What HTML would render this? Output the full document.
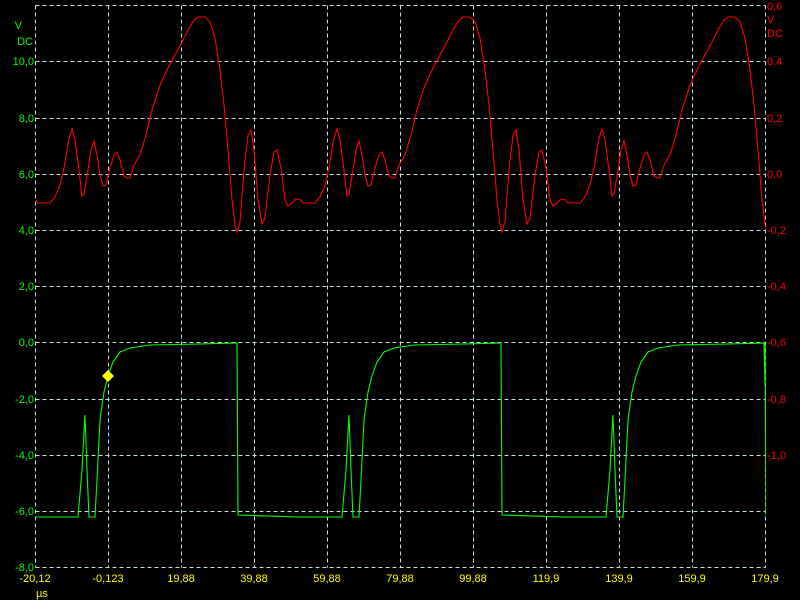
<!DOCTYPE html>
<html><head><meta charset="utf-8"><style>
html,body{margin:0;padding:0;background:#000;width:800px;height:600px;overflow:hidden}
svg{display:block}
text{font-family:"Liberation Sans",sans-serif;font-size:11px}
</style></head><body>
<svg width="800" height="600" viewBox="0 0 800 600">
<defs>
<clipPath id="c"><rect x="35" y="5" width="731" height="563"/></clipPath>
<path id="r" fill="none" stroke="#ff0000" stroke-width="1.1" d="M36,200 L38,203 L50,203 L55,197 L60,185 L64,168 L69,138 L72,129 L75,140 L79,170 L82,196 L84,194 L88,170 L91,150 L94,141 L97,155 L100,175 L103,186 L106,185 L110,168 L114,155 L117,152 L120,160 L124,176 L127,178 L130,178 L134,165 L140,155 L146,135 L152,110 L160,85 L168,68 L175,55 L182,42 L188,30 L194,20 L198,17 L205,17 L210,22 L215,38 L220,70 L224,105 L228,150 L232,200 L235,225 L237,232 L240,222 L244,170 L248,135 L251,130 L254,150 L258,200 L262,224 L265,218 L270,175 L274,152 L277,150 L281,168 L285,200 L288,206 L292,203 L296,199 L301,200"/>
<path id="g" fill="none" stroke="#00ff00" stroke-width="1.1" d="M36,517 L78,517 L82,470 L85,415 L87,470 L89,517 L95,517 L97,480 L100,420 L104,392 L108,376 L113,362 L120,352 L130,348 L150,345 L200,344 L237,343 L238,515 L300,517"/>
</defs>
<g stroke="#c8e0ec" stroke-width="1" stroke-dasharray="4,3" fill="none">
<path d="M35.5,5.5V567.5M108.5,5.5V567.5M181.5,5.5V567.5M254.5,5.5V567.5M327.5,5.5V567.5M400.5,5.5V567.5M473.5,5.5V567.5M546.5,5.5V567.5M619.5,5.5V567.5M692.5,5.5V567.5M765.5,5.5V567.5"/>
<path d="M35.5,5.5H765.5M35.5,61.5H765.5M35.5,118.5H765.5M35.5,174.5H765.5M35.5,230.5H765.5M35.5,286.5H765.5M35.5,342.5H765.5M35.5,399.5H765.5M35.5,455.5H765.5M35.5,511.5H765.5M35.5,567.5H765.5"/>
</g>
<g clip-path="url(#c)">
<use href="#r"/><use href="#r" transform="translate(265,0)"/><use href="#r" transform="translate(530,0)"/>
<use href="#g"/><use href="#g" transform="translate(264,0)"/><use href="#g" transform="translate(528,0)"/>
<path fill="none" stroke="#00ff00" stroke-width="1.1" d="M764,343 L765,385"/>
</g>
<path d="M108,370 L114,376 L108,382 L102,376Z" fill="#ffff00"/>
<g fill="#00ff00" text-anchor="end">
<text x="22" y="29">V</text><text x="33" y="45">DC</text>
<text x="34" y="65">10,0</text><text x="34" y="122">8,0</text><text x="34" y="178">6,0</text><text x="34" y="234">4,0</text><text x="34" y="290">2,0</text><text x="34" y="346">0,0</text><text x="34" y="403">-2,0</text><text x="34" y="459">-4,0</text><text x="34" y="515">-6,0</text><text x="34" y="571">-8,0</text>
</g>
<g fill="#ff0000">
<text x="767" y="10">0,6</text><text x="767" y="23">V</text><text x="767" y="37">DC</text>
<text x="767" y="65">0,4</text><text x="767" y="122">0,2</text><text x="767" y="178">0,0</text><text x="767" y="234">-0,2</text><text x="767" y="290">-0,4</text><text x="767" y="346">-0,6</text><text x="767" y="403">-0,8</text><text x="767" y="459">-1,0</text>
</g>
<g fill="#ffff00" text-anchor="middle">
<text x="35" y="582">-20,12</text><text x="108" y="582">-0,123</text><text x="181" y="582">19,88</text><text x="254" y="582">39,88</text><text x="327" y="582">59,88</text><text x="400" y="582">79,88</text><text x="473" y="582">99,88</text><text x="546" y="582">119,9</text><text x="619" y="582">139,9</text><text x="692" y="582">159,9</text><text x="765" y="582">179,9</text>
<text x="42" y="597">µs</text>
</g>
</svg>
</body></html>
